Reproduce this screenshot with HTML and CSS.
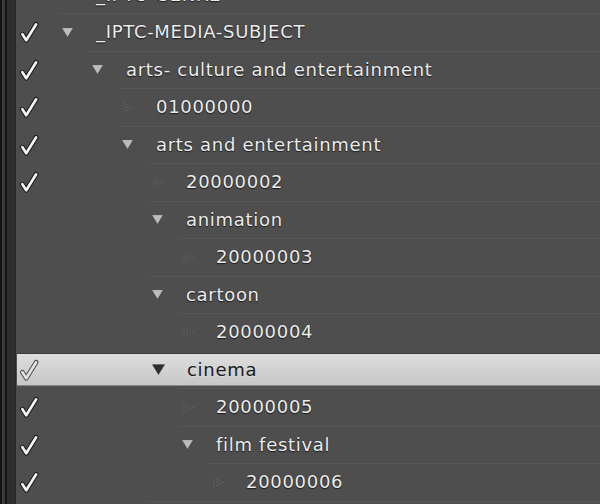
FILE: index.html
```html
<!DOCTYPE html>
<html>
<head>
<meta charset="utf-8">
<link rel="stylesheet" href="styles.css">
</head>
<body>
<div class="panel">
  <div class="edge"></div>
  <div class="list">
    <div class="row">
      <div class="check"></div>
      <div class="node lvl0"><span class="twist"><svg class="tri" viewBox="0 0 12 10"><path d="M0.5 0.5 H11.5 L6 9.5 Z"/></svg></span><span class="label">_IPTC-GENRE</span></div>
    </div>
    <div class="row">
      <div class="check"><svg viewBox="0 0 20 20"><path class="co" d="M4 12 L7.5 17.5 L16.5 3"/><path class="ci" d="M4 12 L7.5 17.5 L16.5 3"/></svg></div>
      <div class="node lvl0"><span class="twist"><svg class="tri" viewBox="0 0 12 10"><path d="M0.5 0.5 H11.5 L6 9.5 Z"/></svg></span><span class="label">_IPTC-MEDIA-SUBJECT</span></div>
    </div>
    <div class="row">
      <div class="check"><svg viewBox="0 0 20 20"><path class="co" d="M4 12 L7.5 17.5 L16.5 3"/><path class="ci" d="M4 12 L7.5 17.5 L16.5 3"/></svg></div>
      <div class="node lvl1"><span class="twist"><svg class="tri" viewBox="0 0 12 10"><path d="M0.5 0.5 H11.5 L6 9.5 Z"/></svg></span><span class="label">arts- culture and entertainment</span></div>
    </div>
    <div class="row">
      <div class="check"><svg viewBox="0 0 20 20"><path class="co" d="M4 12 L7.5 17.5 L16.5 3"/><path class="ci" d="M4 12 L7.5 17.5 L16.5 3"/></svg></div>
      <div class="node lvl2"><span class="twist"><svg class="leaf" viewBox="0 0 12 12"><g><circle cx="1" cy="1" r="0.55"/><circle cx="1" cy="4" r="0.55"/><circle cx="1" cy="7" r="0.55"/><circle cx="1" cy="10" r="0.55"/><circle cx="4" cy="2.5" r="0.55"/><circle cx="4" cy="5.5" r="0.55"/><circle cx="4" cy="8.5" r="0.55"/><circle cx="7" cy="4" r="0.55"/><circle cx="7" cy="7" r="0.55"/><circle cx="10" cy="5.5" r="0.55"/></g></svg></span><span class="label">01000000</span></div>
    </div>
    <div class="row">
      <div class="check"><svg viewBox="0 0 20 20"><path class="co" d="M4 12 L7.5 17.5 L16.5 3"/><path class="ci" d="M4 12 L7.5 17.5 L16.5 3"/></svg></div>
      <div class="node lvl2"><span class="twist"><svg class="tri" viewBox="0 0 12 10"><path d="M0.5 0.5 H11.5 L6 9.5 Z"/></svg></span><span class="label">arts and entertainment</span></div>
    </div>
    <div class="row">
      <div class="check"><svg viewBox="0 0 20 20"><path class="co" d="M4 12 L7.5 17.5 L16.5 3"/><path class="ci" d="M4 12 L7.5 17.5 L16.5 3"/></svg></div>
      <div class="node lvl3"><span class="twist"><svg class="leaf" viewBox="0 0 12 12"><g><circle cx="1" cy="1" r="0.55"/><circle cx="1" cy="4" r="0.55"/><circle cx="1" cy="7" r="0.55"/><circle cx="1" cy="10" r="0.55"/><circle cx="4" cy="2.5" r="0.55"/><circle cx="4" cy="5.5" r="0.55"/><circle cx="4" cy="8.5" r="0.55"/><circle cx="7" cy="4" r="0.55"/><circle cx="7" cy="7" r="0.55"/><circle cx="10" cy="5.5" r="0.55"/></g></svg></span><span class="label">20000002</span></div>
    </div>
    <div class="row">
      <div class="check"></div>
      <div class="node lvl3"><span class="twist"><svg class="tri" viewBox="0 0 12 10"><path d="M0.5 0.5 H11.5 L6 9.5 Z"/></svg></span><span class="label">animation</span></div>
    </div>
    <div class="row">
      <div class="check"></div>
      <div class="node lvl4"><span class="twist"><svg class="leaf" viewBox="0 0 12 12"><g><circle cx="1" cy="1" r="0.55"/><circle cx="1" cy="4" r="0.55"/><circle cx="1" cy="7" r="0.55"/><circle cx="1" cy="10" r="0.55"/><circle cx="4" cy="2.5" r="0.55"/><circle cx="4" cy="5.5" r="0.55"/><circle cx="4" cy="8.5" r="0.55"/><circle cx="7" cy="4" r="0.55"/><circle cx="7" cy="7" r="0.55"/><circle cx="10" cy="5.5" r="0.55"/></g></svg></span><span class="label">20000003</span></div>
    </div>
    <div class="row">
      <div class="check"></div>
      <div class="node lvl3"><span class="twist"><svg class="tri" viewBox="0 0 12 10"><path d="M0.5 0.5 H11.5 L6 9.5 Z"/></svg></span><span class="label">cartoon</span></div>
    </div>
    <div class="row">
      <div class="check"></div>
      <div class="node lvl4"><span class="twist"><svg class="leaf" viewBox="0 0 12 12"><g><circle cx="1" cy="1" r="0.55"/><circle cx="1" cy="4" r="0.55"/><circle cx="1" cy="7" r="0.55"/><circle cx="1" cy="10" r="0.55"/><circle cx="4" cy="2.5" r="0.55"/><circle cx="4" cy="5.5" r="0.55"/><circle cx="4" cy="8.5" r="0.55"/><circle cx="7" cy="4" r="0.55"/><circle cx="7" cy="7" r="0.55"/><circle cx="10" cy="5.5" r="0.55"/></g></svg></span><span class="label">20000004</span></div>
    </div>
    <div class="row sel">
      <div class="check"><svg viewBox="0 0 20 20"><path class="co" d="M4 12 L7.5 17.5 L16.5 3"/><path class="ci" d="M4 12 L7.5 17.5 L16.5 3"/></svg></div>
      <div class="node lvl3"><span class="twist"><svg class="tri" viewBox="0 0 12 10"><path d="M0.5 0.5 H11.5 L6 9.5 Z"/></svg></span><span class="label">cinema</span></div>
    </div>
    <div class="row">
      <div class="check"><svg viewBox="0 0 20 20"><path class="co" d="M4 12 L7.5 17.5 L16.5 3"/><path class="ci" d="M4 12 L7.5 17.5 L16.5 3"/></svg></div>
      <div class="node lvl4"><span class="twist"><svg class="leaf" viewBox="0 0 12 12"><g><circle cx="1" cy="1" r="0.55"/><circle cx="1" cy="4" r="0.55"/><circle cx="1" cy="7" r="0.55"/><circle cx="1" cy="10" r="0.55"/><circle cx="4" cy="2.5" r="0.55"/><circle cx="4" cy="5.5" r="0.55"/><circle cx="4" cy="8.5" r="0.55"/><circle cx="7" cy="4" r="0.55"/><circle cx="7" cy="7" r="0.55"/><circle cx="10" cy="5.5" r="0.55"/></g></svg></span><span class="label">20000005</span></div>
    </div>
    <div class="row">
      <div class="check"><svg viewBox="0 0 20 20"><path class="co" d="M4 12 L7.5 17.5 L16.5 3"/><path class="ci" d="M4 12 L7.5 17.5 L16.5 3"/></svg></div>
      <div class="node lvl4"><span class="twist"><svg class="tri" viewBox="0 0 12 10"><path d="M0.5 0.5 H11.5 L6 9.5 Z"/></svg></span><span class="label">film festival</span></div>
    </div>
    <div class="row">
      <div class="check"><svg viewBox="0 0 20 20"><path class="co" d="M4 12 L7.5 17.5 L16.5 3"/><path class="ci" d="M4 12 L7.5 17.5 L16.5 3"/></svg></div>
      <div class="node lvl5"><span class="twist"><svg class="leaf" viewBox="0 0 12 12"><g><circle cx="1" cy="1" r="0.55"/><circle cx="1" cy="4" r="0.55"/><circle cx="1" cy="7" r="0.55"/><circle cx="1" cy="10" r="0.55"/><circle cx="4" cy="2.5" r="0.55"/><circle cx="4" cy="5.5" r="0.55"/><circle cx="4" cy="8.5" r="0.55"/><circle cx="7" cy="4" r="0.55"/><circle cx="7" cy="7" r="0.55"/><circle cx="10" cy="5.5" r="0.55"/></g></svg></span><span class="label">20000006</span></div>
    </div>
    <div class="row">
      <div class="check"></div>
      <div class="node lvl3"></div>
    </div>
  </div>
</div>
</body>
</html>
```

FILE: styles.css
```css
html, body {
  margin: 0;
  padding: 0;
}
body {
  width: 600px;
  height: 504px;
  overflow: hidden;
  background: #4e4e4e;
  font-family: "DejaVu Sans", "Liberation Sans", sans-serif;
}
.panel {
  display: flex;
  height: 504px;
  overflow: hidden;
}
.edge {
  flex: 0 0 16px;
  background: linear-gradient(to right,
    #121212 0, #121212 2px,
    #3a3a3a 2px, #3a3a3a 5px,
    #141414 5px, #141414 7px,
    #2f2f2f 7px, #2f2f2f 15px,
    #262626 15px, #262626 16px);
}
.list {
  flex: 1;
  margin-top: -24.25px;
  display: flex;
  flex-direction: column;
}
.row {
  flex: 0 0 37.5px;
  height: 37.5px;
  display: flex;
  align-items: stretch;
}
.check {
  flex: 0 0 42px;
  display: flex;
  align-items: center;
}
.check svg {
  width: 22px;
  height: 22px;
  margin-left: 2px;
  margin-top: 0;
}
.check .co {
  fill: none;
  stroke: #1e1e1e;
  stroke-width: 4.4;
  stroke-linecap: round;
  stroke-linejoin: round;
}
.check .ci {
  fill: none;
  stroke: #f4f4f4;
  stroke-width: 2.4;
  stroke-linecap: round;
  stroke-linejoin: round;
}
.node {
  flex: 1;
  display: flex;
  align-items: center;
  border-top: 1px solid #565656;
  box-sizing: border-box;
}
.lvl0 { margin-left: 0; }
.lvl1 { margin-left: 30px; }
.lvl2 { margin-left: 60px; }
.lvl3 { margin-left: 90px; }
.lvl4 { margin-left: 120px; }
.lvl5 { margin-left: 150px; }
.twist {
  flex: 0 0 38px;
  display: flex;
  align-items: center;
}
.tri {
  width: 13px;
  height: 11px;
  margin-left: 2.5px;
  margin-top: -1px;
}
.tri path {
  fill: #bdbdbd;
  stroke: #333333;
  stroke-width: 0.5;
}
.leaf {
  width: 12px;
  height: 12px;
  margin-left: 5px;
}
.leaf circle {
  fill: #747474;
}
.label {
  font-size: 18px;
  letter-spacing: 0.7px;
  color: #ececec;
  text-shadow: 0 1px 1px #1c1c1c, 0 0 1px #2a2a2a;
  white-space: nowrap;
  margin-top: -2px;
}
.sel {
  background: linear-gradient(to bottom,
    transparent 0, transparent 2px,
    #3c3c3c 2px, #3c3c3c 3.5px,
    #dddddd 3.5px, #c7c7c7 calc(100% - 3px),
    #8a8a8a calc(100% - 3px), #8a8a8a calc(100% - 2px),
    transparent calc(100% - 2px));
  margin-left: 1px;
}
.sel .check svg {
  margin-left: 1px;
}
.sel .node {
  border-top-color: transparent;
}
.sel .co {
  stroke: #4a4a4a;
  stroke-width: 4.2;
}
.sel .ci {
  stroke: #e4e4e4;
  stroke-width: 2.4;
}
.sel .tri path {
  fill: #2e2e2e;
  stroke: #2e2e2e;
}
.sel .label {
  color: #1a1a1a;
  text-shadow: 0 1px 0 rgba(255,255,255,0.3);
}
```
